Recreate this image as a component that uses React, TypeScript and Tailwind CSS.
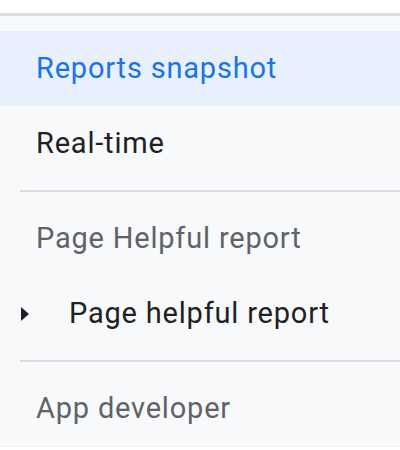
import React from "react";

export default function App() {
  const font = { fontFamily: "Roboto, 'Open Sans', sans-serif" };
  return (
    <div className="w-[400px] h-[450px] bg-white overflow-hidden" style={font}>
      <div className="h-[13px] bg-white" />
      <div className="h-[3px] bg-[#dcdcdc]" />
      <div className="bg-[#f8f9fa] flex flex-col tracking-[0.8px]">
        <div className="h-[15px]" />
        <div className="h-[75px] bg-[#e8f0fe] flex items-center pl-[36px] text-[29px] text-[#1a73e8]">
          Reports snapshot
        </div>
        <div className="h-[75px] flex items-center pl-[36px] text-[29px] text-[#202124]">
          Real-time
        </div>
        <div className="mt-[9px] ml-[20px] h-[2px] bg-[#dadce0]" />
        <div className="mt-[9px] h-[75px] flex items-center pl-[36px] text-[29px] text-[#5f6368]">
          Page Helpful report
        </div>
        <div className="h-[75px] flex items-center text-[29px] text-[#202124]">
          <div className="w-[69px] flex items-center pl-[21px]">
            <svg width="8" height="14" viewBox="0 0 8 14">
              <path d="M0 0 L8 7 L0 14 Z" fill="#202124" />
            </svg>
          </div>
          Page helpful report
        </div>
        <div className="mt-[9px] ml-[20px] h-[2px] bg-[#dadce0]" />
        <div className="mt-[9px] h-[75px] flex items-center pl-[36px] text-[29px] text-[#5f6368]">
          App developer
        </div>
        <div className="h-[1px] bg-[#eeeeee]" />
      </div>
    </div>
  );
}
